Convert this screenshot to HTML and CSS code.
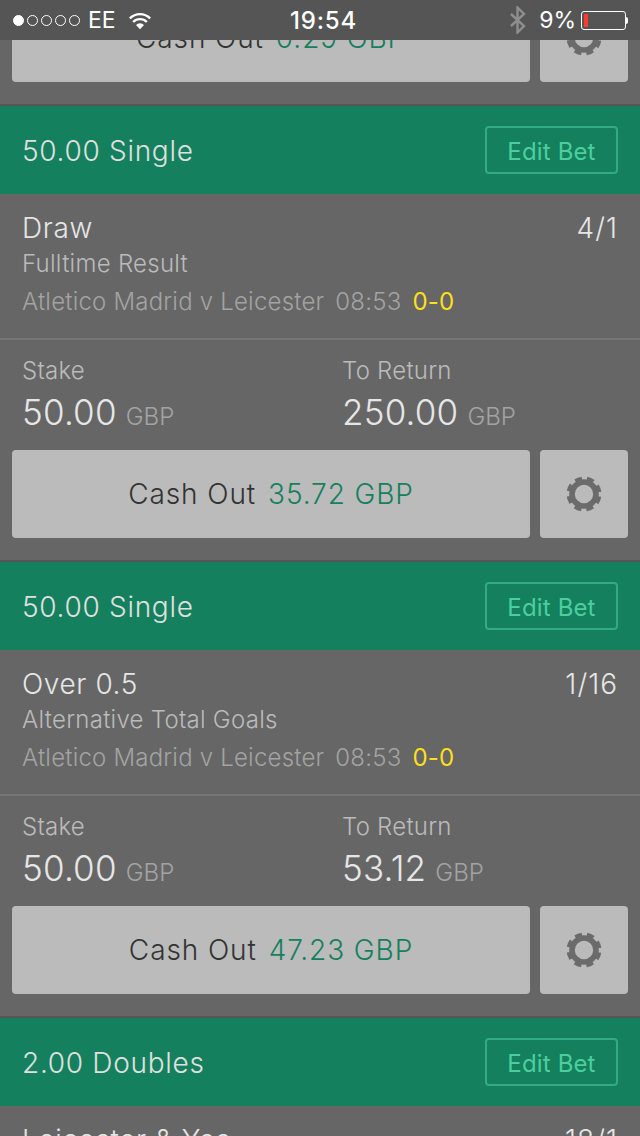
FILE: index.html
```html
<!DOCTYPE html>
<html lang="en">
<head>
<meta charset="utf-8">
<title>Cash Out</title>
<link rel="stylesheet" href="styles.css">
</head>
<body>
<svg class="defs" width="0" height="0" aria-hidden="true">
  <symbol id="gear" viewBox="0 0 36 36">
    <circle cx="18" cy="18" r="12" fill="none" stroke="currentColor" stroke-width="5.6"/>
    <circle cx="18" cy="18" r="15.5" fill="none" stroke="currentColor" stroke-width="4" stroke-dasharray="7 5.17" stroke-dashoffset="-2.58"/>
  </symbol>
</svg>
<div class="status">
  <div class="status-left">
    <span class="signal"><i class="dot on"></i><i class="dot"></i><i class="dot"></i><i class="dot"></i><i class="dot"></i></span>
    <span class="carrier">EE</span>
    <svg class="wifi" width="24" height="19" viewBox="0 0 26 20"><path d="M13 19.500l-4.300-4.600a6 6 0 0 1 8.600 0z" fill="#fff"/><path d="M5.600 11.600a10.400 10.400 0 0 1 14.800 0M2 7.600a15.600 15.600 0 0 1 22 0" fill="none" stroke="#fff" stroke-width="2.600"/></svg>
  </div>
  <div class="status-time">19:54</div>
  <div class="status-right">
    <svg class="bt" width="18" height="28" viewBox="0 0 18 28"><path d="M2 8l13 12-6.500 6.500V1.500L15 8 2 20" fill="none" stroke="#8e8e8e" stroke-width="2.400"/></svg>
    <span class="pct">9%</span>
    <span class="battery"><span class="battery-level"></span></span><span class="battery-cap"></span>
  </div>
</div>
<main class="list">
  <div class="actions">
    <button class="cash"><span class="cash-label">Cash Out</span><span class="cash-value">0.29 GBP</span></button>
    <button class="settings"><svg class="gear"><use href="#gear"/></svg></button>
  </div>
  <section class="bet">
    <header class="bet-head"><span class="bet-title">50.00 Single</span><span class="edit">Edit Bet</span></header>
    <div class="selection">
      <div class="sel-row"><span class="sel-name">Draw</span><span class="sel-odds">4/1</span></div>
      <div class="market">Fulltime Result</div>
      <div class="event"><span>Atletico Madrid v Leicester</span><span>08:53</span><span class="score">0-0</span></div>
    </div>
    <div class="amounts">
      <div class="amount"><div class="amount-label">Stake</div><div class="amount-value">50.00<small>GBP</small></div></div>
      <div class="amount"><div class="amount-label">To Return</div><div class="amount-value">250.00<small>GBP</small></div></div>
    </div>
    <div class="actions">
      <button class="cash"><span class="cash-label">Cash Out</span><span class="cash-value">35.72 GBP</span></button>
      <button class="settings"><svg class="gear"><use href="#gear"/></svg></button>
    </div>
  </section>
  <section class="bet">
    <header class="bet-head"><span class="bet-title">50.00 Single</span><span class="edit">Edit Bet</span></header>
    <div class="selection">
      <div class="sel-row"><span class="sel-name">Over 0.5</span><span class="sel-odds">1/16</span></div>
      <div class="market">Alternative Total Goals</div>
      <div class="event"><span>Atletico Madrid v Leicester</span><span>08:53</span><span class="score">0-0</span></div>
    </div>
    <div class="amounts">
      <div class="amount"><div class="amount-label">Stake</div><div class="amount-value">50.00<small>GBP</small></div></div>
      <div class="amount"><div class="amount-label">To Return</div><div class="amount-value">53.12<small>GBP</small></div></div>
    </div>
    <div class="actions">
      <button class="cash"><span class="cash-label">Cash Out</span><span class="cash-value">47.23 GBP</span></button>
      <button class="settings"><svg class="gear"><use href="#gear"/></svg></button>
    </div>
  </section>
  <section class="bet">
    <header class="bet-head"><span class="bet-title">2.00 Doubles</span><span class="edit">Edit Bet</span></header>
    <div class="selection">
      <div class="sel-row"><span class="sel-name">Leicester &amp; Yes</span><span class="sel-odds">18/1</span></div>
    </div>
  </section>
</main>
</body>
</html>
```
FILE: styles.css
```css
* { box-sizing: border-box; }
html, body { margin: 0; height: 1136px; overflow: hidden; }
body { background: #666; font-family: Inter, "Noto Sans", sans-serif; font-weight: 300; color: #e6e6e6; position: relative; }
.defs { display: block; height: 0; }

.status { position: absolute; top: 0; left: 0; right: 0; height: 40px; background: #555; z-index: 2; display: grid; grid-template-columns: 1fr auto 1fr; align-items: center; padding: 0 12px 0 13px; color: #fff; }
.status-left { display: flex; align-items: center; }
.signal { display: flex; gap: 3px; }
.dot { width: 11px; height: 11px; border-radius: 50%; border: 1px solid #fff; }
.dot.on { background: #fff; }
.carrier { font-size: 23px; font-weight: 400; margin-left: 8px; }
.wifi { margin-left: 12px; }
.status-time { font-size: 24px; font-weight: 500; letter-spacing: .8px; margin-left: 6px; }
.status-right { display: flex; align-items: center; justify-content: flex-end; }
.bt { margin-right: 12px; }
.pct { font-size: 23px; font-weight: 400; margin-right: 5px; }
.battery { width: 45px; height: 19px; border: 1px solid #fff; border-radius: 3px; padding: 2px; display: block; }
.battery-level { display: block; width: 4px; height: 100%; background: #ff3b30; }
.battery-cap { width: 2px; height: 7px; background: #fff; border-radius: 0 2px 2px 0; }

.list { margin-top: -6px; }
.actions { display: flex; gap: 10px; padding: 0 12px 22px; }
.cash, .settings { border: 0; border-radius: 4px; background: #bbb; height: 88px; padding: 0; font: inherit; display: flex; align-items: center; justify-content: center; }
.cash { flex: 1; gap: 12px; font-size: 28px; letter-spacing: .9px; font-weight: 300; }
.settings { width: 88px; color: #6b6b6b; }
.cash-label { color: #333; }
.cash-value { color: #14805e; }
.gear { width: 36px; height: 36px; display: block; }

.bet { border-top: 2px solid #555; }
.bet-head { height: 88px; background: #14805e; display: flex; align-items: center; justify-content: space-between; padding: 1px 22px 0 22px; }
.bet-title { font-size: 28px; letter-spacing: .7px; color: #e0e0e0; }
.edit { width: 133px; height: 48px; margin-top: -1px; border: 2px solid #31ab83; border-radius: 4px; color: #4bcf9f; font-size: 24px; font-weight: 400; letter-spacing: .15px; display: flex; align-items: center; justify-content: center; padding-top: 2px; }

.selection { height: 146px; padding: 15px 22px 0 22px; border-bottom: 2px solid #757575; }
.sel-row { display: flex; justify-content: space-between; font-size: 28px; line-height: 38px; letter-spacing: .6px; color: #e6e6e6; }
.sel-odds { letter-spacing: 1px; }
.market { font-size: 24px; line-height: 32px; margin-top: 1px; letter-spacing: .27px; color: #bbb; }
.event { display: flex; gap: 11px; font-size: 24px; line-height: 32px; margin-top: 6px; letter-spacing: .2px; color: #a3a3a3; }
.score { color: #ffdf1b; font-weight: 400; }

.amounts { height: 110px; padding: 15px 23px 0 22px; display: grid; grid-template-columns: 320px 1fr; }
.amount-label { font-size: 24px; line-height: 32px; letter-spacing: .25px; color: #bbb; }
.amount-value { font-size: 35px; line-height: 46px; margin-top: 2px; letter-spacing: .2px; color: #e6e6e6; }
.amount-value small { font-size: 24px; letter-spacing: 0; color: #a3a3a3; margin-left: 9px; }
```
